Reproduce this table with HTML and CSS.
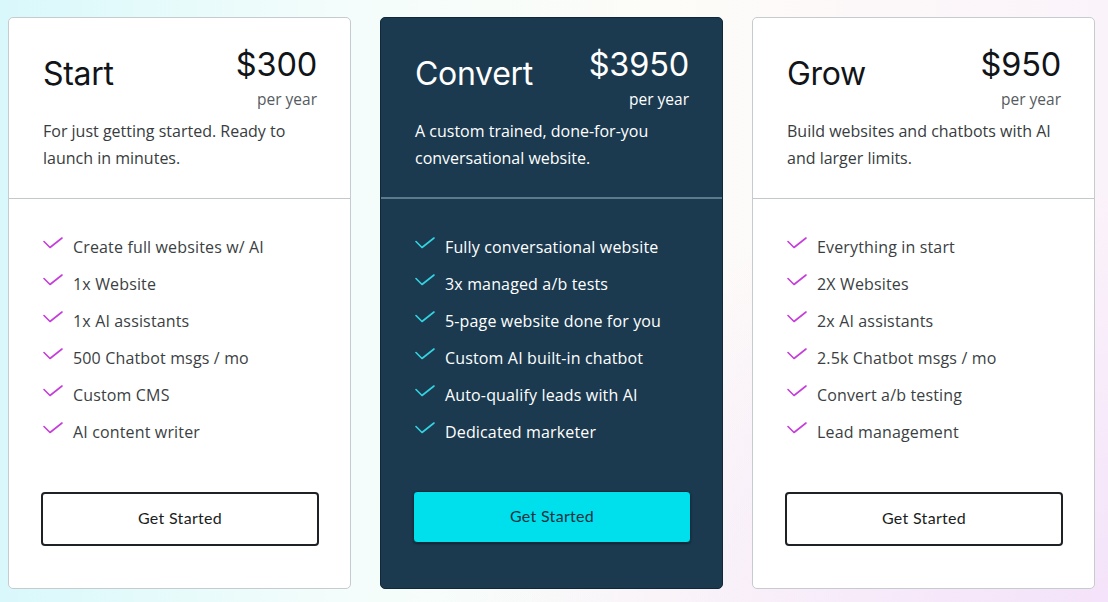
FILE: index.html
```html
<!DOCTYPE html>
<html lang="en">
<head>
<meta charset="utf-8">
<title>Pricing</title>
<link rel="stylesheet" href="styles.css">
</head>
<body>
<main class="plans">
  <section class="card">
    <header class="card-head">
      <div class="head-row">
        <h2 class="plan-name">Start</h2>
        <div class="price-box">
          <div class="price">$300</div>
          <div class="period">per year</div>
        </div>
      </div>
      <p class="desc">For just getting started. Ready to launch in minutes.</p>
    </header>
    <div class="card-body">
      <ul class="features">
        <li><svg class="check" viewBox="0 0 20 12"><path d="M1 4.5 L7 10.5 L19 1"/></svg>Create full websites w/ AI</li>
        <li><svg class="check" viewBox="0 0 20 12"><path d="M1 4.5 L7 10.5 L19 1"/></svg>1x Website</li>
        <li><svg class="check" viewBox="0 0 20 12"><path d="M1 4.5 L7 10.5 L19 1"/></svg>1x AI assistants</li>
        <li><svg class="check" viewBox="0 0 20 12"><path d="M1 4.5 L7 10.5 L19 1"/></svg>500 Chatbot msgs / mo</li>
        <li><svg class="check" viewBox="0 0 20 12"><path d="M1 4.5 L7 10.5 L19 1"/></svg>Custom CMS</li>
        <li><svg class="check" viewBox="0 0 20 12"><path d="M1 4.5 L7 10.5 L19 1"/></svg>AI content writer</li>
      </ul>
      <button class="btn">Get Started</button>
    </div>
  </section>

  <section class="card card-dark">
    <header class="card-head">
      <div class="head-row">
        <h2 class="plan-name">Convert</h2>
        <div class="price-box">
          <div class="price">$3950</div>
          <div class="period">per year</div>
        </div>
      </div>
      <p class="desc">A custom trained, done-for-you conversational website.</p>
    </header>
    <div class="card-body">
      <ul class="features">
        <li><svg class="check" viewBox="0 0 20 12"><path d="M1 4.5 L7 10.5 L19 1"/></svg>Fully conversational website</li>
        <li><svg class="check" viewBox="0 0 20 12"><path d="M1 4.5 L7 10.5 L19 1"/></svg>3x managed a/b tests</li>
        <li><svg class="check" viewBox="0 0 20 12"><path d="M1 4.5 L7 10.5 L19 1"/></svg>5-page website done for you</li>
        <li><svg class="check" viewBox="0 0 20 12"><path d="M1 4.5 L7 10.5 L19 1"/></svg>Custom AI built-in chatbot</li>
        <li><svg class="check" viewBox="0 0 20 12"><path d="M1 4.5 L7 10.5 L19 1"/></svg>Auto-qualify leads with AI</li>
        <li><svg class="check" viewBox="0 0 20 12"><path d="M1 4.5 L7 10.5 L19 1"/></svg>Dedicated marketer</li>
      </ul>
      <button class="btn btn-primary">Get Started</button>
    </div>
  </section>

  <section class="card">
    <header class="card-head">
      <div class="head-row">
        <h2 class="plan-name">Grow</h2>
        <div class="price-box">
          <div class="price">$950</div>
          <div class="period">per year</div>
        </div>
      </div>
      <p class="desc">Build websites and chatbots with AI and larger limits.</p>
    </header>
    <div class="card-body">
      <ul class="features">
        <li><svg class="check" viewBox="0 0 20 12"><path d="M1 4.5 L7 10.5 L19 1"/></svg>Everything in start</li>
        <li><svg class="check" viewBox="0 0 20 12"><path d="M1 4.5 L7 10.5 L19 1"/></svg>2X Websites</li>
        <li><svg class="check" viewBox="0 0 20 12"><path d="M1 4.5 L7 10.5 L19 1"/></svg>2x AI assistants</li>
        <li><svg class="check" viewBox="0 0 20 12"><path d="M1 4.5 L7 10.5 L19 1"/></svg>2.5k Chatbot msgs / mo</li>
        <li><svg class="check" viewBox="0 0 20 12"><path d="M1 4.5 L7 10.5 L19 1"/></svg>Convert a/b testing</li>
        <li><svg class="check" viewBox="0 0 20 12"><path d="M1 4.5 L7 10.5 L19 1"/></svg>Lead management</li>
      </ul>
      <button class="btn">Get Started</button>
    </div>
  </section>
</main>
</body>
</html>
```

FILE: styles.css
```css
* { box-sizing: border-box; }

html, body { height: 100%; }

body {
  margin: 0;
  padding: 17px 13px 13px 8px;
  font-family: "Open Sans", "Liberation Sans", sans-serif;
  background:
    radial-gradient(ellipse 60% 70% at 100% 100%, #f4e3fa 0%, rgba(244,227,250,0) 100%),
    linear-gradient(90deg, #d9f8fb 0%, #f3fdfb 30%, #fdfcf8 60%, #fbf3fa 100%);
  overflow: hidden;
}

.plans {
  display: grid;
  grid-template-columns: 343px 343px 343px;
  column-gap: 29px;
}

.card {
  height: 572px;
  background: #ffffff;
  border: 1px solid #c6cbce;
  border-radius: 5px;
  display: flex;
  flex-direction: column;
  color: #111418;
}

.card-dark {
  background: #1b3a4f;
  border-color: #102838;
  color: #ffffff;
}

.card-head {
  height: 181px;
  padding: 28px 33px 0 34px;
  border-bottom: 1px solid #c3c8cb;
}

.card-dark .card-head {
  border-bottom: 2px solid #5d7a8c;
}

.head-row {
  display: flex;
  justify-content: space-between;
  align-items: flex-start;
}

.plan-name {
  margin: 10px 0 0;
  font-family: Inter, "Liberation Sans", sans-serif;
  font-weight: 400;
  font-size: 32px;
  letter-spacing: -0.3px;
  line-height: 36px;
}

.price-box {
  text-align: right;
}

.price {
  font-family: Inter, "Liberation Sans", sans-serif;
  font-size: 32.5px;
  line-height: 38px;
  letter-spacing: -0.2px;
}

.period {
  font-size: 15.5px;
  line-height: 20px;
  color: #555b60;
  margin-top: 5px;
}

.card-dark .period { color: #ffffff; }

.desc {
  margin: 9px 0 0;
  font-size: 16px;
  line-height: 27px;
  color: #383c40;
  font-weight: 400;
}

.card-dark .desc { color: #ffffff; }

.card-body {
  flex: 1;
  display: flex;
  flex-direction: column;
  padding: 29px 32px 42px 32px;
}

.features {
  list-style: none;
  margin: 0;
  padding: 0;
}

.features li {
  display: flex;
  align-items: center;
  height: 37px;
  font-size: 16px;
  letter-spacing: 0.15px;
  color: #3b3f43;
  padding-left: 2px;
}

.card-dark .features li { color: #ffffff; }

.check {
  width: 20px;
  height: 12px;
  margin: -7px 10px 0 0;
  flex: none;
}

.check path {
  fill: none;
  stroke: #c53ddb;
  stroke-width: 1.6;
  stroke-linecap: round;
  stroke-linejoin: round;
}

.card-dark .check path { stroke: #33d4e2; }

.btn {
  margin-top: auto;
  height: 54px;
  width: 278px;
  padding: 0 0 3px;
  background: #ffffff;
  border: 2px solid #1e2227;
  border-radius: 4px;
  font-family: Lato, "Noto Sans", sans-serif;
  font-size: 16px;
  color: #1a1d21;
  letter-spacing: 0.3px;
  cursor: pointer;
}

.btn-primary {
  height: 52px;
  margin-bottom: 3px;
  background: #00dfec;
  border: 1px solid #0c2b3c;
  box-shadow: 0 1px 2px rgba(0,0,0,0.4);
  color: #18323f;
}
```
